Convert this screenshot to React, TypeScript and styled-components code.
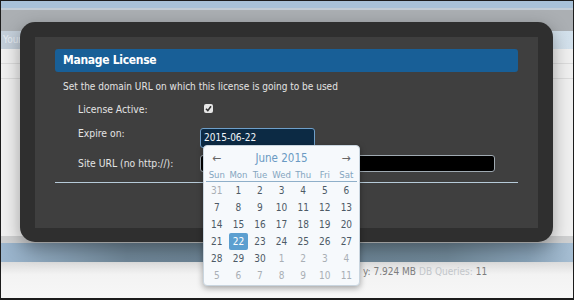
import React from "react";
import styled, { createGlobalStyle } from "styled-components";

const Global = createGlobalStyle`
  html, body { margin: 0; padding: 0; background: #1e1e1e; }
  body { width: 574px; height: 300px; overflow: hidden; }
  * { box-sizing: border-box; }
`;

const FONT = `"DejaVu Sans Condensed", "Liberation Sans", sans-serif`;

const Frame = styled.div`
  position: relative;
  width: 574px;
  height: 300px;
  border-style: solid;
  border-color: #1c1c1c;
  border-width: 1px 1px 2px 1px;
  display: flex;
  flex-direction: column;
  overflow: hidden;
  font-family: ${FONT};
  background: #f2f2f2;
`;

const TopStrip = styled.div`
  height: 9px;
  background: #a8c1d8;
  border-bottom: 2px solid #c3cdd6;
  flex: none;
`;

const NavBar = styled.div`
  height: 21px;
  background: #abafb3;
  flex: none;
`;

const SubNav = styled.div`
  height: 18px;
  flex: none;
  background: linear-gradient(to right, #c4cfda 0%, #c8d4df 60%, #d3e1ec 100%);
  color: #e6ecf2;
  font-size: 10px;
  line-height: 18px;
  padding-left: 2px;
`;

const Content = styled.div`
  flex: 1;
  background: #f0f0f0;
  display: flex;
  flex-direction: column;
`;

const ContentLine = styled.div<{ $gap: number }>`
  margin-top: ${(p) => p.$gap}px;
  height: 1px;
  background: #dcdcdc;
`;

const GrayStrip = styled.div`
  height: 7px;
  flex: none;
  background: #cfd0d1;
`;

const BlueBar = styled.div`
  height: 19px;
  flex: none;
  background: linear-gradient(
    to right,
    #9db7cf 0%,
    #8aa3b8 8%,
    #6e8596 22%,
    #687f8f 50%,
    #6f8797 78%,
    #86a0b5 92%,
    #a6bed3 100%
  );
`;

const Bottom = styled.div`
  height: 36px;
  flex: none;
  background: linear-gradient(to bottom, #dcdcdc 0%, #f3f3f3 35%, #f7f7f7 100%);
  display: flex;
  align-items: flex-start;
  padding: 4px 0 0 362px;
  font-size: 10px;
  color: #7c7c7c;
`;

const Stat = styled.span<{ $light?: boolean }>`
  color: ${(p) => (p.$light ? "#c2c6ca" : "#7d7d7d")};
  margin-right: 3px;
  white-space: nowrap;
`;

const Modal = styled.div`
  position: absolute;
  left: 19px;
  top: 21px;
  width: 533px;
  height: 220px;
  border-radius: 15px;
  background: #2f2f2f;
  padding: 15px;
  box-shadow: 0 6px 18px rgba(0, 0, 0, 0.35);
`;

const Panel = styled.div`
  height: 191px;
  background: #3f3f3f;
  padding: 12px 20px 0 20px;
  display: flex;
  flex-direction: column;
  color: #e2e2e2;
`;

const Header = styled.div`
  height: 23px;
  background: #185f97;
  border-radius: 3px;
  color: #ffffff;
  font-weight: bold;
  font-size: 12px;
  letter-spacing: -0.3px;
  line-height: 23px;
  padding-left: 8px;
`;

const Desc = styled.div`
  margin-top: 8px;
  font-size: 10px;
  line-height: 14px;
  padding-left: 8px;
  color: #e4e4e4;
`;

const Row = styled.div<{ $top: number }>`
  margin-top: ${(p) => p.$top}px;
  display: flex;
  align-items: flex-start;
`;

const Label = styled.div<{ $pad?: number }>`
  width: 145px;
  padding-left: 23px;
  padding-top: ${(p) => p.$pad ?? 0}px;
  font-size: 10.3px;
  line-height: 14px;
  color: #e4e4e4;
  flex: none;
`;

const Check = styled.span`
  margin-left: 4px;
  margin-top: 2px;
  width: 9px;
  height: 9px;
  border-radius: 2px;
  background: #e6e6e6;
  display: inline-flex;
  align-items: center;
  justify-content: center;
`;

const DateInput = styled.div`
  width: 115px;
  height: 20px;
  margin-top: 2px;
  background: #0c2a44;
  border: 1px solid #6f9fc9;
  border-radius: 3px;
  color: #f2f6fa;
  font-size: 10px;
  line-height: 18px;
  padding-left: 3px;
`;

const UrlInput = styled.div`
  width: 295px;
  height: 17px;
  background: #000;
  border: 1px solid #9fa9b1;
  border-radius: 3px;
`;

const Rule = styled.div`
  margin-top: 10px;
  height: 1px;
  background: #b6cad8;
`;

const Picker = styled.div`
  position: absolute;
  left: 202px;
  top: 144px;
  width: 157px;
  height: 141px;
  background: #f6f9fc;
  border: 1px solid #c9d5df;
  border-radius: 4px;
  box-shadow: 0 2px 6px rgba(0, 0, 0, 0.35);
  padding: 2px 2px 0 2px;
  font-family: ${FONT};
`;

const PickHead = styled.div`
  height: 20px;
  display: flex;
  align-items: center;
  justify-content: space-between;
  padding: 0 4px 0 4px;
  color: #6b9bc4;
`;

const Arrow = styled.span`
  font-size: 12px;
  color: #666;
  width: 14px;
  text-align: center;
`;

const Month = styled.span`
  font-size: 11.5px;
  color: #6a9ac3;
`;

const Grid = styled.div`
  display: grid;
  grid-template-columns: repeat(7, 21.6px);
`;

const DayName = styled.div`
  height: 14px;
  line-height: 13px;
  text-align: center;
  font-size: 9.5px;
  color: #84a5c0;
  border-bottom: 1px solid #8fafc9;
`;

const Day = styled.div<{ $muted?: boolean; $active?: boolean }>`
  height: 17px;
  line-height: 17px;
  text-align: center;
  font-size: 10px;
  color: ${(p) => (p.$active ? "#ffffff" : p.$muted ? "#a9afb5" : "#4d5a66")};
  background: ${(p) => (p.$active ? "#5c9fd0" : "transparent")};
  border-radius: ${(p) => (p.$active ? "2px" : "0")};
  margin: ${(p) => (p.$active ? "0 1px" : "0")};
`;

const names = ["Sun", "Mon", "Tue", "Wed", "Thu", "Fri", "Sat"];
const days: { n: number; muted?: boolean }[] = [
  { n: 31, muted: true },
  ...Array.from({ length: 30 }, (_, i) => ({ n: i + 1 })),
  ...Array.from({ length: 11 }, (_, i) => ({ n: i + 1, muted: true })),
];

export default function App() {
  return (
    <>
      <Global />
      <Frame>
        <TopStrip />
        <NavBar />
        <SubNav>Your F</SubNav>
        <Content>
          <ContentLine $gap={14} />
          <ContentLine $gap={14} />
        </Content>
        <GrayStrip />
        <BlueBar />
        <Bottom>
          <Stat>y: 7.924 MB</Stat>
          <Stat $light>DB Queries:</Stat>
          <Stat>11</Stat>
        </Bottom>

        <Modal>
          <Panel>
            <Header>Manage License</Header>
            <Desc>Set the domain URL on which this license is going to be used</Desc>
            <Row $top={8}>
              <Label>License Active:</Label>
              <Check>
                <svg width="7" height="7" viewBox="0 0 7 7">
                  <path d="M1 3.8 L2.8 5.6 L6 1.2" stroke="#333" strokeWidth="1.6" fill="none" />
                </svg>
              </Check>
            </Row>
            <Row $top={10}>
              <Label>Expire on:</Label>
              <DateInput>2015-06-22</DateInput>
            </Row>
            <Row $top={7}>
              <Label $pad={1}>Site URL (no http://):</Label>
              <UrlInput />
            </Row>
            <Rule />
          </Panel>
        </Modal>

        <Picker>
          <PickHead>
            <Arrow>←</Arrow>
            <Month>June 2015</Month>
            <Arrow>→</Arrow>
          </PickHead>
          <Grid>
            {names.map((d) => (
              <DayName key={d}>{d}</DayName>
            ))}
            {days.map((d, i) => (
              <Day key={i} $muted={d.muted} $active={!d.muted && d.n === 22}>
                {d.n}
              </Day>
            ))}
          </Grid>
        </Picker>
      </Frame>
    </>
  );
}
